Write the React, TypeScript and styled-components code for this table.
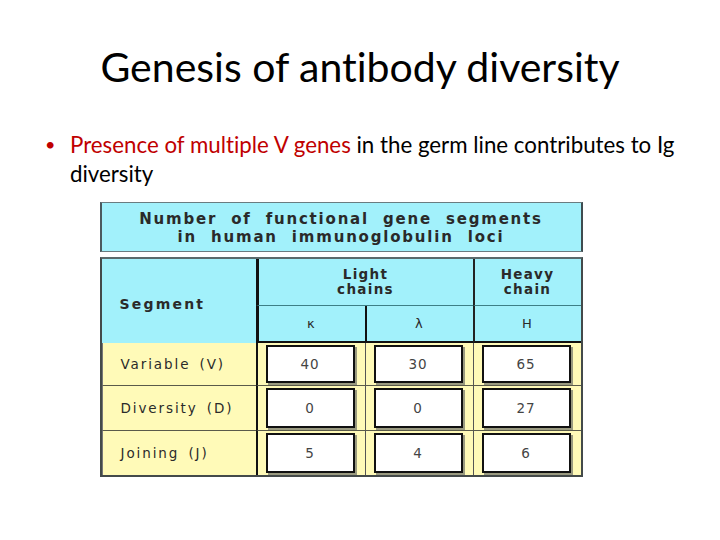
import React from "react";
import styled, { createGlobalStyle } from "styled-components";

const Global = createGlobalStyle`
  html, body { margin: 0; padding: 0; background: #fff; }
  body { width: 720px; height: 540px; overflow: hidden; }
`;

const Slide = styled.div`
  width: 720px;
  height: 540px;
  display: flex;
  flex-direction: column;
  align-items: center;
  font-family: Lato, "Open Sans", sans-serif;
  font-variant-ligatures: none;
  color: #000;
`;

const Title = styled.h1`
  margin: 43px 0 0 0;
  font-weight: 400;
  font-size: 41px;
  line-height: 48px;
  text-align: center;
`;

const Bullets = styled.ul`
  align-self: stretch;
  margin: 39px 0 0 0;
  padding: 0 20px 0 70px;
  list-style: none;
`;

const Bullet = styled.li`
  position: relative;
  font-size: 22.3px;
  line-height: 29px;
  &::before {
    content: "•";
    position: absolute;
    left: -25px;
    top: 0;
    font-size: 18px;
    color: #c00000;
  }
`;

const Red = styled.span`
  color: #c00000;
`;

const Figure = styled.div`
  margin: 14px 0 0 -38px;
  width: 483px;
  display: flex;
  flex-direction: column;
  gap: 5px;
  font-family: "DejaVu Sans", "Liberation Sans", sans-serif;
  color: #2a2a2a;
`;

const Caption = styled.div`
  height: 47px;
  background: #a2f1fb;
  border: 1px solid #6a7c80;
  border-left: 2px solid #4b5a5e;
  border-right: 2px solid #3f4c50;
  display: flex;
  flex-direction: column;
  align-items: center;
  justify-content: center;
  font-weight: 700;
  font-size: 15px;
  line-height: 18px;
  letter-spacing: 1.8px;
  word-spacing: 7px;
  padding-top: 1px;
`;

const Grid = styled.div`
  display: grid;
  grid-template-columns: 154px 109px 108px 1fr;
  grid-template-rows: 47px 37px 43px 45px 44px;
  border: 2px solid #444a4a;
  border-top-color: #5a6a6c;
`;

const Head = styled.div<{ $col: string; $row: string; $left?: string; $bottom?: string }>`
  grid-column: ${(p) => p.$col};
  grid-row: ${(p) => p.$row};
  background: #a2f1fb;
  display: flex;
  align-items: center;
  justify-content: center;
  flex-direction: column;
  border-left: ${(p) => p.$left || "none"};
  border-bottom: ${(p) => p.$bottom || "none"};
  font-weight: 700;
  font-size: 13.5px;
  line-height: 15px;
  letter-spacing: 1.3px;
`;

const SegHead = styled(Head)`
  align-items: flex-start;
  padding-left: 18px;
  padding-top: 6px;
  font-size: 14px;
  letter-spacing: 2.2px;
`;

const Sym = styled.span`
  font-weight: 400;
  font-size: 13px;
  font-family: "DejaVu Sans", sans-serif;
`;

const Label = styled.div<{ $last?: boolean }>`
  background: #fffab8;
  border-left: 1px solid #777;
  border-bottom: ${(p) => (p.$last ? "none" : "1px solid #5a5a4a")};
  display: flex;
  align-items: center;
  padding-left: 18px;
  font-size: 13.5px;
  letter-spacing: 1.9px;
  word-spacing: 3px;
`;

const Cell = styled.div<{ $last?: boolean; $sep: string }>`
  background: #fffab8;
  border-left: ${(p) => p.$sep};
  border-bottom: ${(p) => (p.$last ? "none" : "1px solid #5a5a4a")};
  display: flex;
  padding: 2px 10px 2px 8px;
`;

const Box = styled.div`
  flex: 1;
  background: #fff;
  border: 2px solid #111;
  box-shadow: 2px 2px 0 #9a9a80;
  display: flex;
  align-items: center;
  justify-content: center;
  font-size: 13.5px;
  letter-spacing: 1px;
  color: #444;
`;

const rows = [
  { label: "Variable  (V)", vals: ["40", "30", "65"] },
  { label: "Diversity  (D)", vals: ["0", "0", "27"] },
  { label: "Joining  (J)", vals: ["5", "4", "6"] },
];

const seps = ["2px solid #111", "1px solid #555", "1px solid #555"];

export default function App() {
  return (
    <Slide>
      <Global />
      <Title>Genesis of antibody diversity</Title>
      <Bullets>
        <Bullet>
          <Red>Presence of multiple V genes</Red> in the germ line contributes to Ig diversity
        </Bullet>
      </Bullets>
      <Figure>
        <Caption>
          <div>Number of functional gene segments</div>
          <div>in human immunoglobulin loci</div>
        </Caption>
        <Grid>
          <SegHead $col="1" $row="1 / 3">Segment</SegHead>
          <Head $col="2 / 4" $row="1" $left="3px solid #111" $bottom="1px solid #3d7f86">
            <div>Light</div>
            <div>chains</div>
          </Head>
          <Head $col="4" $row="1" $left="2px solid #222" $bottom="1px solid #3d7f86">
            <div>Heavy</div>
            <div>chain</div>
          </Head>
          <Head $col="2" $row="2" $left="3px solid #111" $bottom="2px solid #111">
            <Sym>κ</Sym>
          </Head>
          <Head $col="3" $row="2" $left="2px solid #111" $bottom="2px solid #111">
            <Sym>λ</Sym>
          </Head>
          <Head $col="4" $row="2" $left="2px solid #222" $bottom="2px solid #111">
            <Sym>H</Sym>
          </Head>
          {rows.map((r, i) => (
            <React.Fragment key={r.label}>
              <Label $last={i === rows.length - 1}>{r.label}</Label>
              {r.vals.map((v, j) => (
                <Cell key={j} $sep={seps[j]} $last={i === rows.length - 1}>
                  <Box>{v}</Box>
                </Cell>
              ))}
            </React.Fragment>
          ))}
        </Grid>
      </Figure>
    </Slide>
  );
}
